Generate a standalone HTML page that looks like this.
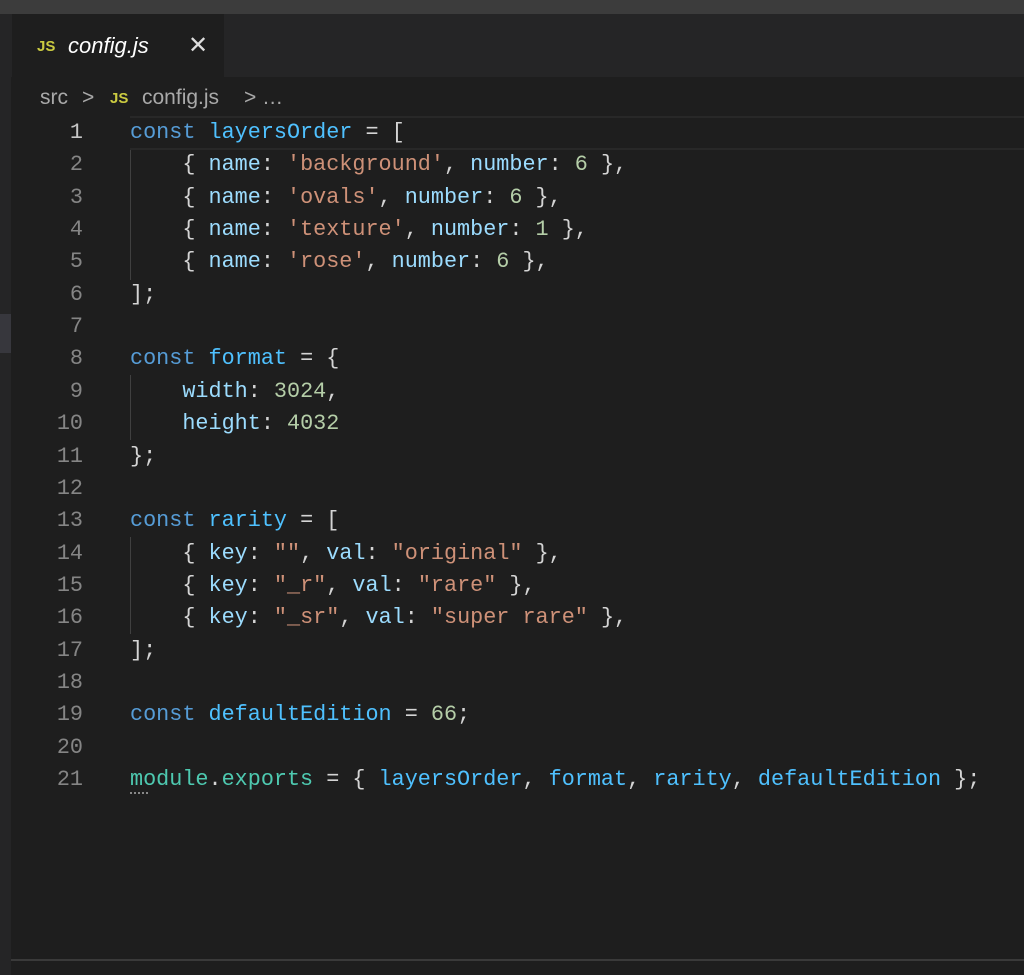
<!DOCTYPE html>
<html><head><meta charset="utf-8"><style>
html,body{margin:0;padding:0;background:#1e1e1e;width:1024px;height:975px;overflow:hidden;position:relative;font-family:"Liberation Sans",sans-serif}
.top{position:absolute;left:0;top:0;width:1024px;height:14px;background:#3c3c3c}
.left{position:absolute;left:0;top:14px;width:11px;height:961px;background:#252526}
.mark{position:absolute;left:0;top:314px;width:11px;height:39px;background:#37373d}
.tabbar{position:absolute;left:11px;top:14px;width:1013px;height:63px;background:#252526}
.tab{position:absolute;left:12px;top:14px;width:212px;height:63px;background:#1e1e1e}
.js{color:#cbcb41;font-weight:bold;font-size:15px;position:absolute}
.tabname{position:absolute;left:68px;top:33px;font-size:22px;font-style:italic;color:#fff}
.x{position:absolute;left:188px;top:31px;font-size:24px;color:#ddd}
.bc{position:absolute;top:86px;font-size:21px;color:#a9a9a9}
.cur{position:absolute;left:130px;top:116px;width:894px;height:30px;border-top:2px solid #282828;border-bottom:2px solid #282828}
.ln{position:absolute;left:30px;width:53px;text-align:right;font-family:"Liberation Mono",monospace;font-size:21.8px;color:#858585}
.code{position:absolute;left:130px;font-family:"Liberation Mono",monospace;font-size:21.8px;color:#d4d4d4;white-space:pre}
.g{position:absolute;left:130px;width:1px;background:#404040}
.k{color:#569cd6}.v{color:#4fc1ff}.p{color:#9cdcfe}.s{color:#ce9178}.n{color:#b5cea8}.m{color:#4ec9b0}
.bot{position:absolute;left:11px;top:959px;width:1013px;height:2px;background:#3a3a3a}
</style></head><body>
<div class="top"></div>
<div class="tabbar"></div>
<div class="left"></div><div class="mark"></div>
<div class="tab"></div>
<span class="js" style="left:37px;top:38px">JS</span>
<span class="tabname">config.js</span>
<span class="x">✕</span>
<span class="bc" style="left:40px">src</span>
<span class="bc" style="left:82px">&gt;</span>
<span class="js" style="left:110px;top:90px">JS</span>
<span class="bc" style="left:142px">config.js</span>
<span class="bc" style="left:244px">&gt; …</span>
<div class="cur"></div>
<div class="g" style="top:150px;height:130px"></div>
<div class="g" style="top:375px;height:65px"></div>
<div class="g" style="top:537px;height:97px"></div>
<div class="ln" style="top:120px;color:#c6c6c6">1</div>
<div class="ln" style="top:152px">2</div>
<div class="ln" style="top:185px">3</div>
<div class="ln" style="top:217px">4</div>
<div class="ln" style="top:249px">5</div>
<div class="ln" style="top:282px">6</div>
<div class="ln" style="top:314px">7</div>
<div class="ln" style="top:346px">8</div>
<div class="ln" style="top:379px">9</div>
<div class="ln" style="top:411px">10</div>
<div class="ln" style="top:444px">11</div>
<div class="ln" style="top:476px">12</div>
<div class="ln" style="top:508px">13</div>
<div class="ln" style="top:541px">14</div>
<div class="ln" style="top:573px">15</div>
<div class="ln" style="top:605px">16</div>
<div class="ln" style="top:638px">17</div>
<div class="ln" style="top:670px">18</div>
<div class="ln" style="top:702px">19</div>
<div class="ln" style="top:735px">20</div>
<div class="ln" style="top:767px">21</div>
<div class="code" style="top:120px"><span class="k">const</span> <span class="v">layersOrder</span> = [</div>
<div class="code" style="top:152px">    { <span class="p">name</span>: <span class="s">'background'</span>, <span class="p">number</span>: <span class="n">6</span> },</div>
<div class="code" style="top:185px">    { <span class="p">name</span>: <span class="s">'ovals'</span>, <span class="p">number</span>: <span class="n">6</span> },</div>
<div class="code" style="top:217px">    { <span class="p">name</span>: <span class="s">'texture'</span>, <span class="p">number</span>: <span class="n">1</span> },</div>
<div class="code" style="top:249px">    { <span class="p">name</span>: <span class="s">'rose'</span>, <span class="p">number</span>: <span class="n">6</span> },</div>
<div class="code" style="top:282px">];</div>
<div class="code" style="top:346px"><span class="k">const</span> <span class="v">format</span> = {</div>
<div class="code" style="top:379px">    <span class="p">width</span>: <span class="n">3024</span>,</div>
<div class="code" style="top:411px">    <span class="p">height</span>: <span class="n">4032</span></div>
<div class="code" style="top:444px">};</div>
<div class="code" style="top:508px"><span class="k">const</span> <span class="v">rarity</span> = [</div>
<div class="code" style="top:541px">    { <span class="p">key</span>: <span class="s">""</span>, <span class="p">val</span>: <span class="s">"original"</span> },</div>
<div class="code" style="top:573px">    { <span class="p">key</span>: <span class="s">"_r"</span>, <span class="p">val</span>: <span class="s">"rare"</span> },</div>
<div class="code" style="top:605px">    { <span class="p">key</span>: <span class="s">"_sr"</span>, <span class="p">val</span>: <span class="s">"super rare"</span> },</div>
<div class="code" style="top:638px">];</div>
<div class="code" style="top:702px"><span class="k">const</span> <span class="v">defaultEdition</span> = <span class="n">66</span>;</div>
<div class="code" style="top:767px"><span class="m">module</span>.<span class="m">exports</span> = { <span class="v">layersOrder</span>, <span class="v">format</span>, <span class="v">rarity</span>, <span class="v">defaultEdition</span> };</div>
<div style="position:absolute;left:130px;top:792px;width:18px;height:2px;border-top:2px dotted #888"></div>
<div class="bot"></div>
</body></html>
